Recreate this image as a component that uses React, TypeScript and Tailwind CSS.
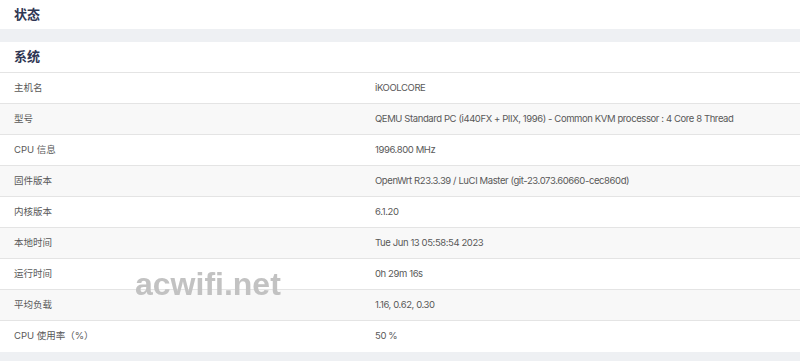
import React from "react";

const rows = [
  { label: "主机名", value: "iKOOLCORE" },
  { label: "型号", value: "QEMU Standard PC (i440FX + PIIX, 1996) - Common KVM processor : 4 Core 8 Thread" },
  { label: "CPU 信息", value: "1996.800 MHz" },
  { label: "固件版本", value: "OpenWrt R23.3.39 / LuCI Master (git-23.073.60660-cec860d)" },
  { label: "内核版本", value: "6.1.20" },
  { label: "本地时间", value: "Tue Jun 13 05:58:54 2023" },
  { label: "运行时间", value: "0h 29m 16s" },
  { label: "平均负载", value: "1.16, 0.62, 0.30" },
  { label: "CPU 使用率（%）", value: "50 %" },
];

export default function App() {
  return (
    <div
      className="relative h-[361px] w-[800px] overflow-hidden bg-[#eef0f3]"
      style={{ fontFamily: 'Inter, "Noto Sans CJK SC", sans-serif' }}
    >
      <div className="flex h-[29px] items-center bg-white px-[14px]">
        <h2 className="text-[13px] font-bold text-[#2f3653]">状态</h2>
      </div>

      <div className="mt-[13px] bg-white">
        <div className="flex h-[31px] items-center border-b border-[#e4e4e4] px-[14px]">
          <h3 className="text-[13px] font-bold text-[#2f3653]">系统</h3>
        </div>
        {rows.map((row, i) => (
          <div
            key={row.label}
            className={
              "flex h-[31px] items-center text-[9.5px] tracking-[-0.4px] text-[#595959] " +
              (i < rows.length - 1 ? "border-b border-[#e4e4e4] " : "") +
              (i % 2 === 1 ? "bg-[#f8f8f8]" : "bg-white")
            }
          >
            <div className="w-[375px] shrink-0 pl-[14px] tracking-normal">{row.label}</div>
            <div>{row.value}</div>
          </div>
        ))}
      </div>

      <div
        className="pointer-events-none absolute left-[135px] top-[268px] text-[32px] font-bold leading-none text-[#c2c2c2] blur-[0.6px]"
        style={{ fontFamily: '"Liberation Sans", sans-serif' }}
      >
        acwifi.net
      </div>
    </div>
  );
}
